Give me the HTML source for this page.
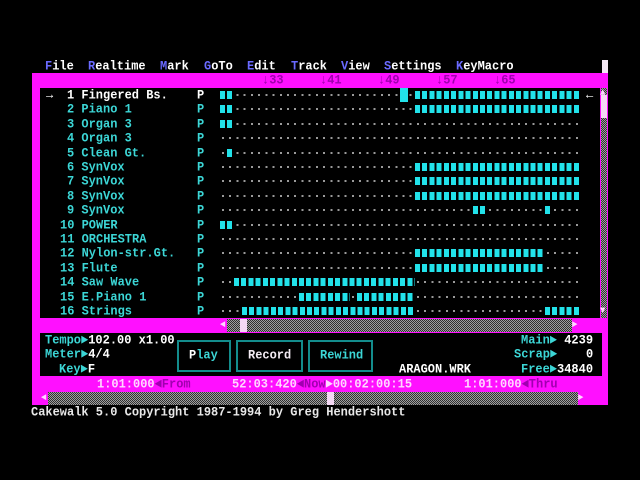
<!DOCTYPE html>
<html><head><meta charset="utf-8"><style>
html,body{margin:0;padding:0;background:#000;}
body{width:640px;height:480px;overflow:hidden;position:relative;font-family:"Liberation Mono","DejaVu Sans Mono",monospace;font-weight:bold;font-size:12px;}
div{position:absolute;}
.t{position:absolute;white-space:pre;line-height:14px;height:14px;transform:scaleY(1.1);transform-origin:0 50%;letter-spacing:0px;}
.w{color:#fff}.c{color:#3cd6d6}.b{color:#6a6aff}.p{color:#a000b0}.pk{color:#ffd6ff}
.mag{background:#ff10ff}
.chk{background:repeating-conic-gradient(#a0a0a0 0 25%,#303030 0 50%) 0 0/2px 2px;}
.dots{height:2px;background:repeating-linear-gradient(90deg,transparent 0 2px,#9a9a9a 2px 4px,transparent 4px 7.22px);}
.blk{height:8px;background:repeating-linear-gradient(90deg,#22e2ea 0 5px,transparent 5px 7.22px);}
.btn{border:2px solid #138c8c;box-sizing:border-box;}
</style></head><body>

<span class="t w" style="left:45px;top:59px"><span class="b">F</span>ile</span>
<span class="t w" style="left:88px;top:59px"><span class="b">R</span>ealtime</span>
<span class="t w" style="left:160px;top:59px"><span class="b">M</span>ark</span>
<span class="t w" style="left:204px;top:59px"><span class="b">G</span>oTo</span>
<span class="t w" style="left:247px;top:59px"><span class="b">E</span>dit</span>
<span class="t w" style="left:291px;top:59px"><span class="b">T</span>rack</span>
<span class="t w" style="left:341px;top:59px"><span class="b">V</span>iew</span>
<span class="t w" style="left:384px;top:59px"><span class="b">S</span>ettings</span>
<span class="t w" style="left:456px;top:59px"><span class="b">K</span>eyMacro</span>
<div style="left:602px;top:60px;width:6px;height:13px;background:#f4e8f4"></div>

<div class="mag" style="left:32px;top:73px;width:576px;height:332px"></div>
<span class="t p" style="left:262px;top:73px">↓33</span>
<span class="t p" style="left:320px;top:73px">↓41</span>
<span class="t p" style="left:378px;top:73px">↓49</span>
<span class="t p" style="left:436px;top:73px">↓57</span>
<span class="t p" style="left:494px;top:73px">↓65</span>

<div style="left:40px;top:88px;width:560px;height:230px;background:#000"></div>
<div class="chk" style="left:601px;top:88px;width:6px;height:230px"></div>
<div style="left:601px;top:95px;width:6px;height:23px;background:#f4d8f4"></div>
<span class="t pk" style="left:600px;top:86px;font-size:9px">▲</span>
<span class="t pk" style="left:600px;top:304px;font-size:9px">▼</span>

<span class="t w" style="left:46px;top:88px">→</span>
<span class="t w" style="left:67px;top:88px">1 Fingered Bs.</span>
<span class="t c" style="left:67px;top:102.4px">2 Piano 1</span>
<span class="t c" style="left:67px;top:116.8px">3 Organ 3</span>
<span class="t c" style="left:67px;top:131.2px">4 Organ 3</span>
<span class="t c" style="left:67px;top:145.6px">5 Clean Gt.</span>
<span class="t c" style="left:67px;top:160px">6 SynVox</span>
<span class="t c" style="left:67px;top:174.4px">7 SynVox</span>
<span class="t c" style="left:67px;top:188.8px">8 SynVox</span>
<span class="t c" style="left:67px;top:203.2px">9 SynVox</span>
<span class="t c" style="left:60px;top:217.6px">10 POWER</span>
<span class="t c" style="left:60px;top:232px">11 ORCHESTRA</span>
<span class="t c" style="left:60px;top:246.4px">12 Nylon-str.Gt.</span>
<span class="t c" style="left:60px;top:260.8px">13 Flute</span>
<span class="t c" style="left:60px;top:275.2px">14 Saw Wave</span>
<span class="t c" style="left:60px;top:289.6px">15 E.Piano 1</span>
<span class="t c" style="left:60px;top:304px">16 Strings</span>
<span class="t w" style="left:197px;top:88px">P</span>
<span class="t c" style="left:197px;top:102.4px">P</span>
<span class="t c" style="left:197px;top:116.8px">P</span>
<span class="t c" style="left:197px;top:131.2px">P</span>
<span class="t c" style="left:197px;top:145.6px">P</span>
<span class="t c" style="left:197px;top:160px">P</span>
<span class="t c" style="left:197px;top:174.4px">P</span>
<span class="t c" style="left:197px;top:188.8px">P</span>
<span class="t c" style="left:197px;top:203.2px">P</span>
<span class="t c" style="left:197px;top:217.6px">P</span>
<span class="t c" style="left:197px;top:232px">P</span>
<span class="t c" style="left:197px;top:246.4px">P</span>
<span class="t c" style="left:197px;top:260.8px">P</span>
<span class="t c" style="left:197px;top:275.2px">P</span>
<span class="t c" style="left:197px;top:289.6px">P</span>
<span class="t c" style="left:197px;top:304px">P</span>
<span class="t w" style="left:586px;top:88px">←</span>

<div class="dots" style="left:220px;top:94px;width:361px"></div>
<div class="dots" style="left:220px;top:108.4px;width:361px"></div>
<div class="dots" style="left:220px;top:122.8px;width:361px"></div>
<div class="dots" style="left:220px;top:137.2px;width:361px"></div>
<div class="dots" style="left:220px;top:151.6px;width:361px"></div>
<div class="dots" style="left:220px;top:166px;width:361px"></div>
<div class="dots" style="left:220px;top:180.4px;width:361px"></div>
<div class="dots" style="left:220px;top:194.8px;width:361px"></div>
<div class="dots" style="left:220px;top:209.2px;width:361px"></div>
<div class="dots" style="left:220px;top:223.6px;width:361px"></div>
<div class="dots" style="left:220px;top:238px;width:361px"></div>
<div class="dots" style="left:220px;top:252.4px;width:361px"></div>
<div class="dots" style="left:220px;top:266.8px;width:361px"></div>
<div class="dots" style="left:220px;top:281.2px;width:361px"></div>
<div class="dots" style="left:220px;top:295.6px;width:361px"></div>
<div class="dots" style="left:220px;top:310px;width:361px"></div>

<div style="left:220px;top:94px;width:15px;height:2px;background:#000"></div>
<div class="blk" style="left:220px;top:91px;width:14.44px"></div>
<div style="left:400px;top:88px;width:8px;height:14px;background:#22e2ea"></div>
<div class="blk" style="left:414.9px;top:91px;width:166px"></div>

<div class="blk" style="left:220px;top:105.4px;width:14.44px"></div>
<div class="blk" style="left:414.9px;top:105.4px;width:166px"></div>

<div class="blk" style="left:220px;top:119.8px;width:14.44px"></div>

<div class="blk" style="left:227.2px;top:148.6px;width:7.22px"></div>

<div class="blk" style="left:414.9px;top:163px;width:166px"></div>
<div class="blk" style="left:414.9px;top:177.4px;width:166px"></div>
<div class="blk" style="left:414.9px;top:191.8px;width:166px"></div>

<div class="blk" style="left:472.7px;top:206.2px;width:14.44px"></div>
<div class="blk" style="left:544.9px;top:206.2px;width:7.22px"></div>

<div class="blk" style="left:220px;top:220.6px;width:14.44px"></div>

<div class="blk" style="left:414.9px;top:249.4px;width:130px"></div>
<div class="blk" style="left:414.9px;top:263.8px;width:130px"></div>

<div class="blk" style="left:234.4px;top:278.2px;width:180.5px"></div>

<div class="blk" style="left:299.4px;top:292.6px;width:50.5px"></div>
<div class="blk" style="left:357.2px;top:292.6px;width:57.8px"></div>

<div class="blk" style="left:241.7px;top:307px;width:173.3px"></div>
<div class="blk" style="left:544.9px;top:307px;width:36.1px"></div>

<div class="chk" style="left:227px;top:319px;width:345px;height:13px"></div>
<div style="left:240px;top:319px;width:7px;height:13px;background:#f4d8f4"></div>
<span class="t pk" style="left:220px;top:318px;font-size:9px">◄</span>
<span class="t pk" style="left:572px;top:318px;font-size:9px">►</span>

<div style="left:40px;top:333px;width:562px;height:43px;background:#000"></div>
<span class="t c" style="left:45px;top:333px">Tempo►<span class="w">102.00 x1.00</span></span>
<span class="t c" style="left:45px;top:347px">Meter►<span class="w">4/4</span></span>
<span class="t c" style="left:59px;top:362px">Key►<span class="w">F</span></span>
<div class="btn" style="left:177px;top:340px;width:54px;height:32px"></div>
<div class="btn" style="left:236px;top:340px;width:67px;height:32px"></div>
<div class="btn" style="left:308px;top:340px;width:65px;height:32px"></div>
<span class="t c" style="left:189px;top:348px"><span class="w">P</span>lay</span>
<span class="t" style="left:248px;top:348px;color:#f4ecf4">Record</span>
<span class="t c" style="left:320px;top:348px">Rewind</span>
<span class="t w" style="left:399px;top:362px">ARAGON.WRK</span>
<span class="t c" style="left:521px;top:333px">Main► <span class="w">4239</span></span>
<span class="t c" style="left:514px;top:347px">Scrap►    <span class="w">0</span></span>
<span class="t c" style="left:521px;top:362px">Free►<span class="w">34840</span></span>

<span class="t pk" style="left:97px;top:377px">1:01:000<span class="p">◄From</span></span>
<span class="t pk" style="left:232px;top:377px">52:03:420<span class="p">◄Now</span>►00:02:00:15</span>
<span class="t pk" style="left:464px;top:377px">1:01:000<span class="p">◄Thru</span></span>

<div class="chk" style="left:48px;top:392px;width:530px;height:13px"></div>
<div style="left:327px;top:392px;width:7px;height:13px;background:#f4d8f4"></div>
<span class="t pk" style="left:41px;top:391px;font-size:9px">◄</span>
<span class="t pk" style="left:578px;top:391px;font-size:9px">►</span>
<div style="left:32px;top:405px;width:576px;height:2px;background:#000"></div>

<span class="t" style="left:31px;top:405px;color:#e8e8e8">Cakewalk 5.0 Copyright 1987-1994 by Greg Hendershott</span>
</body></html>
